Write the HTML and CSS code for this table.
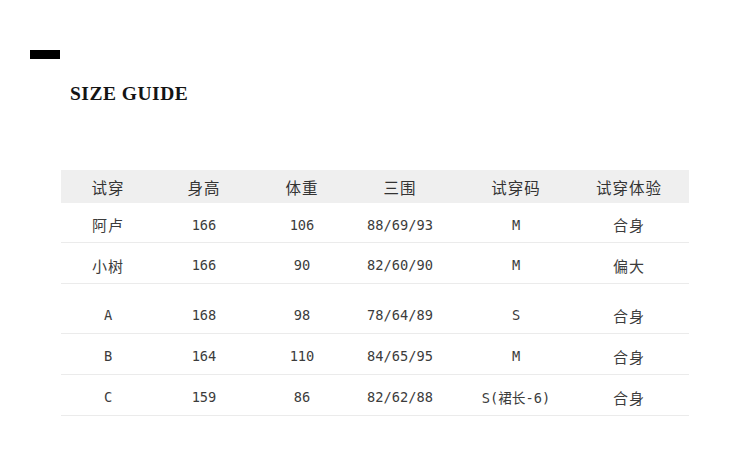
FILE: index.html
```html
<!DOCTYPE html>
<html lang="zh">
<head>
<meta charset="utf-8">
<title>Size Guide</title>
<link rel="stylesheet" href="styles.css">
</head>
<body>
<div class="page">
  <div class="bar"></div>
  <h1 class="title">SIZE GUIDE</h1>
  <div class="table">
    <div class="row head">
      <span class="cn">试穿</span><span class="cn">身高</span><span class="cn">体重</span><span class="cn">三围</span><span class="cn">试穿码</span><span class="cn">试穿体验</span>
    </div>
    <div class="row first">
      <span class="cn">阿卢</span><span>166</span><span>106</span><span>88/69/93</span><span>M</span><span class="cn">合身</span>
    </div>
    <div class="row">
      <span class="cn">小树</span><span>166</span><span>90</span><span>82/60/90</span><span>M</span><span class="cn">偏大</span>
    </div>
    <div class="row group">
      <span>A</span><span>168</span><span>98</span><span>78/64/89</span><span>S</span><span class="cn">合身</span>
    </div>
    <div class="row">
      <span>B</span><span>164</span><span>110</span><span>84/65/95</span><span>M</span><span class="cn">合身</span>
    </div>
    <div class="row">
      <span>C</span><span>159</span><span>86</span><span>82/62/88</span><span>S(裙长-6)</span><span class="cn">合身</span>
    </div>
  </div>
</div>
</body>
</html>
```
FILE: styles.css
```css
html, body {
  margin: 0;
  padding: 0;
  background: #ffffff;
}
.page {
  width: 750px;
  height: 465px;
  padding-top: 50px;
  box-sizing: border-box;
}
.bar {
  width: 30px;
  height: 9px;
  background: #000;
  margin-left: 30px;
}
.title {
  margin: 23px 0 0 70px;
  font-family: "Liberation Serif", "DejaVu Serif", serif;
  font-weight: 700;
  font-size: 19.5px;
  line-height: 24px;
  letter-spacing: 0.5px;
  color: #141414;
}
.table {
  margin: 64px 0 0 61px;
  width: 628px;
  font-family: "DejaVu Sans Mono", "Noto Sans CJK SC", monospace;
  font-size: 13.7px;
  color: #3c3c3c;
}
.row {
  box-sizing: border-box;
  display: grid;
  grid-template-columns: 94px 98px 98px 98px 134px 92px;
  align-items: center;
  height: 41px;
  padding-top: 4px;
  border-bottom: 1px solid #ebebeb;
}
.row span {
  text-align: center;
  white-space: nowrap;
}
.row .cn {
  font-family: "Noto Sans CJK SC", sans-serif;
  font-size: 15px;
  letter-spacing: 1px;
}
.head {
  height: 33px;
  padding-top: 0;
  background: #efefef;
  border-bottom: none;
  color: #333;
}
.head .cn {
  font-size: 15.5px;
}
.first {
  height: 40px;
}
.group {
  padding-top: 13px;
  height: 50px;
}
```
